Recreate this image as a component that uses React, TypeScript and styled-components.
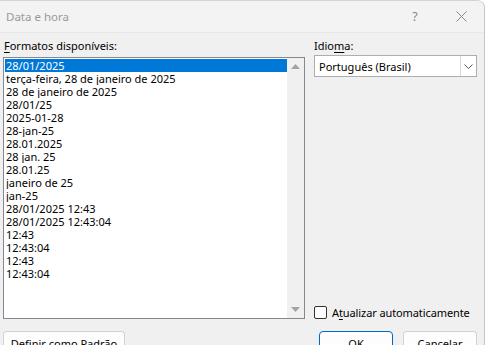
import React from "react";
import styled, { createGlobalStyle } from "styled-components";

const Global = createGlobalStyle`
  html, body { margin: 0; padding: 0; background: #ffffff; overflow: hidden; }
  body { font-family: "Segoe UI", "Noto Sans", "Open Sans", sans-serif; }
`;

const Window = styled.div`
  width: 484px;
  height: 360px;
  background: #f0f0f0;
  border-top: 1px solid #d4d4d4;
  border-right: 1px solid #c4c4c4;
  border-top-right-radius: 8px;
  overflow: hidden;
  display: flex;
  flex-direction: column;
`;

const TitleBar = styled.div`
  height: 31px;
  background: #f3f3f3;
  border-bottom: 1px solid #e8e8e8;
  display: flex;
  align-items: center;
  padding-left: 6px;
  font-size: 11.5px;
  color: #9a9a9a;
`;

const TitleText = styled.span`
  flex: 1;
`;

const TitleButton = styled.span`
  width: 46px;
  color: #8a8a8a;
  font-size: 12.5px;
  display: flex;
  justify-content: center;
  align-items: center;
`;

const Body = styled.div`
  display: grid;
  grid-template-columns: 302px 163px;
  column-gap: 9px;
  padding: 5px 0 0 3px;
  font-size: 11px;
  color: #000;
`;

const Column = styled.div`
  display: flex;
  flex-direction: column;
`;

const Label = styled.div<{ $indent?: number; $height: number }>`
  height: ${(p) => p.$height}px;
  line-height: 15px;
  padding-left: ${(p) => p.$indent ?? 1}px;
  white-space: nowrap;
`;

const U = styled.span`
  text-decoration: underline;
  text-underline-offset: 2px;
`;

const ListBox = styled.div`
  height: 262px;
  border: 1px solid #828790;
  background: #fff;
  display: flex;
  box-sizing: border-box;
`;

const Items = styled.div`
  flex: 1;
  padding: 1px 0 0 1px;
`;

const Item = styled.div<{ $selected?: boolean }>`
  height: 13px;
  line-height: 13px;
  padding-left: 1px;
  white-space: nowrap;
  overflow: hidden;
  background: ${(p) => (p.$selected ? "#0078d7" : "transparent")};
  color: ${(p) => (p.$selected ? "#fff" : "#000")};
`;

const ScrollBar = styled.div`
  width: 17px;
  background: #f0f0f0;
  display: flex;
  flex-direction: column;
  justify-content: space-between;
  align-items: center;
  padding: 6px 0 6px;
`;

const Arrow = styled.svg`
  display: block;
`;

const Combo = styled.div`
  height: 22px;
  box-sizing: border-box;
  border: 1px solid #adadad;
  background: #fff;
  display: flex;
  align-items: center;
`;

const ComboText = styled.div`
  flex: 1;
  padding-left: 4px;
`;

const ComboButton = styled.div`
  width: 15px;
  height: 20px;
  border-left: 1px solid #d9d9d9;
  display: flex;
  align-items: center;
  justify-content: center;
`;

const CheckRow = styled.label`
  display: flex;
  align-items: center;
  gap: 5px;
  height: 13px;
  margin-top: 229px;
  white-space: nowrap;
  letter-spacing: -0.1px;
`;

const CheckBox = styled.span`
  width: 11px;
  height: 11px;
  border: 1px solid #333;
  border-radius: 2px;
  background: #fff;
  flex: none;
`;

const ButtonRow = styled.div<{ $justify?: string }>`
  display: flex;
  gap: 10px;
  justify-content: ${(p) => p.$justify ?? "flex-start"};
  margin-top: 12px;
`;

const Button = styled.div<{ $primary?: boolean; $width: number }>`
  width: ${(p) => p.$width}px;
  height: 24px;
  box-sizing: border-box;
  border: 1px solid ${(p) => (p.$primary ? "#0067c0" : "#d0d0d0")};
  border-bottom-color: ${(p) => (p.$primary ? "#0067c0" : "#b8b8b8")};
  border-radius: 4px;
  background: #fdfdfd;
  display: flex;
  align-items: center;
  justify-content: center;
  white-space: nowrap;
`;

const items = [
  "28/01/2025",
  "terça-feira, 28 de janeiro de 2025",
  "28 de janeiro de 2025",
  "28/01/25",
  "2025-01-28",
  "28-jan-25",
  "28.01.2025",
  "28 jan. 25",
  "28.01.25",
  "janeiro de 25",
  "jan-25",
  "28/01/2025 12:43",
  "28/01/2025 12:43:04",
  "12:43",
  "12:43:04",
  "12:43",
  "12:43:04",
];

export default function App() {
  return (
    <>
      <Global />
      <Window>
        <TitleBar>
          <TitleText>Data e hora</TitleText>
          <TitleButton>?</TitleButton>
          <TitleButton>
            <svg width="11" height="11" viewBox="0 0 11 11">
              <path d="M0.5 0.5 L10.5 10.5 M10.5 0.5 L0.5 10.5" stroke="#8a8a8a" strokeWidth="1" />
            </svg>
          </TitleButton>
        </TitleBar>
        <Body>
          <Column>
            <Label $height={19}>
              <U>F</U>ormatos disponíveis:
            </Label>
            <ListBox>
              <Items>
                {items.map((t, i) => (
                  <Item key={i} $selected={i === 0}>
                    {t}
                  </Item>
                ))}
              </Items>
              <ScrollBar>
                <Arrow width="9" height="5" viewBox="0 0 9 5">
                  <path d="M0 5 L4.5 0 L9 5 Z" fill="#a3a3a3" />
                </Arrow>
                <Arrow width="9" height="5" viewBox="0 0 9 5">
                  <path d="M0 0 L4.5 5 L9 0 Z" fill="#a3a3a3" />
                </Arrow>
              </ScrollBar>
            </ListBox>
            <ButtonRow>
              <Button $width={122}>Definir como Padrão</Button>
            </ButtonRow>
          </Column>
          <Column>
            <Label $indent={0} $height={17}>
              Idio<U>m</U>a:
            </Label>
            <Combo>
              <ComboText>Português (Brasil)</ComboText>
              <ComboButton>
                <svg width="9" height="5" viewBox="0 0 9 5">
                  <path d="M0.5 0.5 L4.5 4.5 L8.5 0.5" fill="none" stroke="#555" strokeWidth="1" />
                </svg>
              </ComboButton>
            </Combo>
            <CheckRow>
              <CheckBox />
              <span>
                A<U>t</U>ualizar automaticamente
              </span>
            </CheckRow>
            <ButtonRow $justify="flex-end">
              <Button $primary $width={74}>OK</Button>
              <Button $width={74}>Cancelar</Button>
            </ButtonRow>
          </Column>
        </Body>
      </Window>
    </>
  );
}
